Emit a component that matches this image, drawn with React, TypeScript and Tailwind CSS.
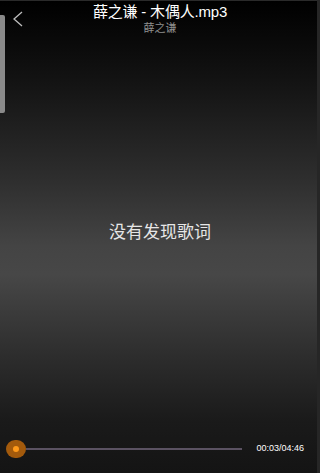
import React from "react";

export default function App() {
  return (
    <div
      className="relative w-[320px] h-[473px] overflow-hidden flex flex-col bg-[linear-gradient(to_bottom,#000000_0%,#141414_18%,#2e2e2e_38%,#444444_52%,#474747_58%,#2c2c2c_76%,#1a1a1a_89%,#141414_100%)]"
      style={{ fontFamily: '"Liberation Sans", "Noto Sans CJK SC", sans-serif' }}
    >
      {/* top edge line */}
      <div className="absolute left-0 top-0 w-full h-[1px] bg-[#2a2a2a]" />
      {/* left scroll tab */}
      <div className="absolute left-0 top-[15px] w-[5px] h-[98px] bg-[#8a8a8a] rounded-r-[2px]" />
      {/* right edge strip */}
      <div className="absolute right-0 top-0 w-[3px] h-full bg-[#262626]" />

      {/* header */}
      <div className="relative h-[40px] flex flex-col items-center pt-[3px]">
        <svg className="absolute left-[12px] top-[11px]" width="12" height="16" viewBox="0 0 12 16">
          <path d="M10 1 L2 8 L10 15" fill="none" stroke="#bdbdbd" strokeWidth="1.3" />
        </svg>
        <div className="text-[15px] leading-[18px] text-white tracking-[-0.2px]">薛之谦 - 木偶人.mp3</div>
        <div className="mt-[1px] text-[11px] leading-[13px] text-[#8e8e8e]">薛之谦</div>
      </div>

      {/* center */}
      <div className="flex-1 flex items-center justify-center pb-[2px]">
        <div className="text-[17px] text-[#e6e6e6]" style={{ fontFamily: '"Noto Sans CJK SC", sans-serif' }}>没有发现歌词</div>
      </div>

      {/* progress */}
      <div className="h-[50px] flex items-center pl-[6px] pr-[16px] pt-[2px]">
        <div className="w-[20px] h-[18px] rounded-full bg-[#a35a0c] flex items-center justify-center shrink-0">
          <div className="w-[6px] h-[6px] rounded-full bg-[#ff9a1a]" />
        </div>
        <div className="w-[216px] h-[2px] bg-[#5b5262]" />
        <div className="ml-auto text-[9px] text-white">00:03/04:46</div>
      </div>
    </div>
  );
}
